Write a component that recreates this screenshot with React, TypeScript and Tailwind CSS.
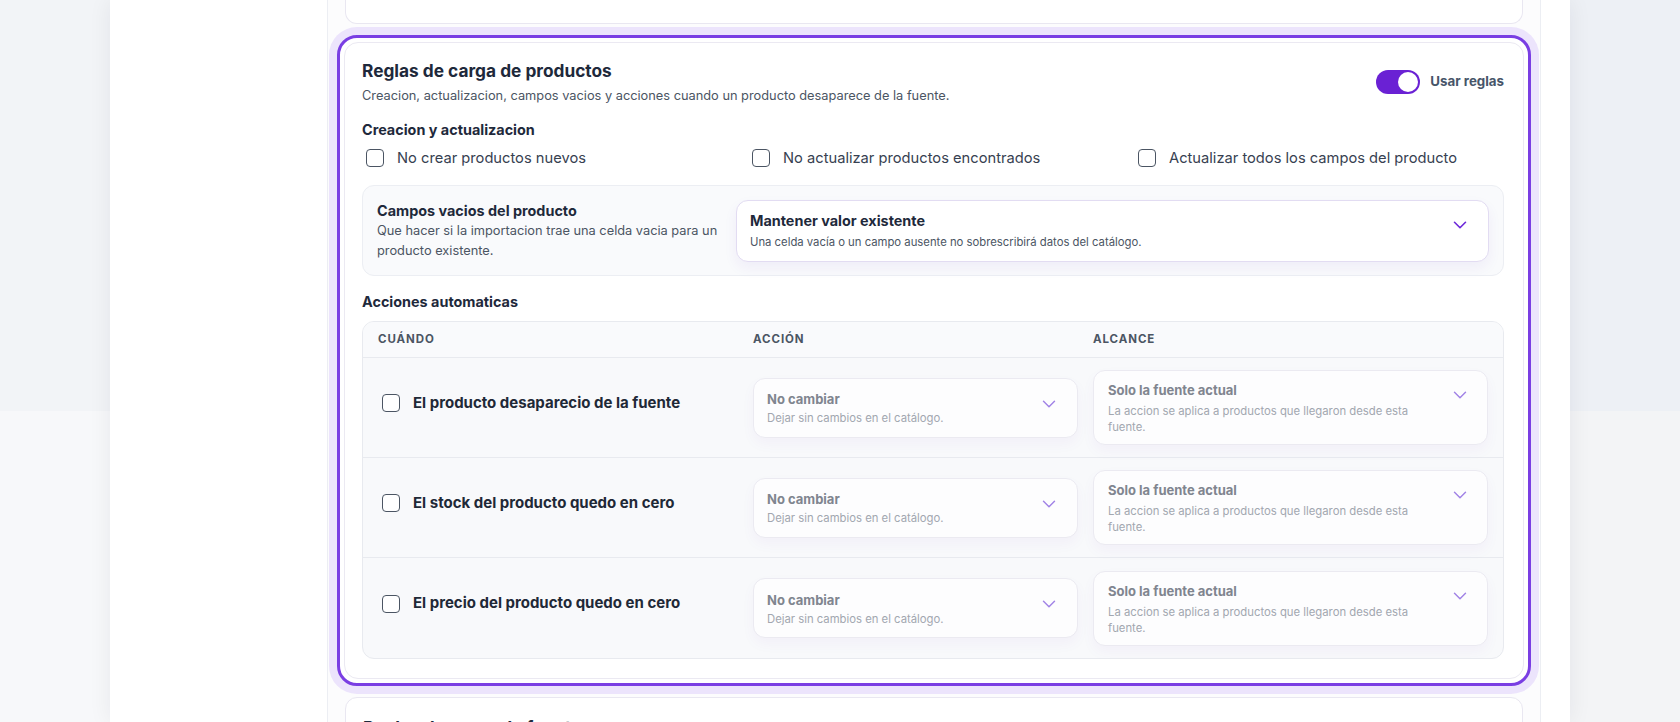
import React from 'react';
import { ChevronDown } from 'lucide-react';

const TRIGGERS = [
  'El producto desaparecio de la fuente',
  'El stock del producto quedo en cero',
  'El precio del producto quedo en cero',
];

function Checkbox() {
  return <span className="block w-[18px] h-[18px] shrink-0 rounded-[4px] border-[1.5px] border-[#4b5563] bg-white" />;
}

function Toggle() {
  return (
    <span className="flex items-center w-[44px] h-[24px] rounded-full bg-[#6a21d4] justify-end px-[2px]">
      <span className="block w-[20px] h-[20px] rounded-full bg-white" />
    </span>
  );
}

export default function App() {
  return (
    <div className="flex h-[722px] overflow-hidden bg-white" style={{ fontFamily: 'Inter, "Noto Sans", sans-serif' }}>
      {/* left gutter */}
      <div className="w-[110px] shrink-0 flex flex-col">
        <div className="h-[411px] bg-[#f2f4f7]" />
        <div className="flex-1 bg-[#f7f8fa]" />
      </div>

      {/* main panel */}
      <div className="flex-1 flex bg-white shadow-[0_0_22px_rgba(15,23,42,0.07)] relative">
        <div className="w-[217px] shrink-0" />

        <div className="w-[1214px] shrink-0 border-x border-[#eceef3] bg-[#fcfcfd] px-[17px] flex flex-col gap-[19px]">
          {/* previous card (scrolled) */}
          <div className="h-[24px] shrink-0 rounded-b-xl border border-t-0 border-[#e9e7f1] bg-white" />

          {/* selected card */}
          <div className="-mx-[8px] -my-[8px] shrink-0 rounded-[20px] border-[3px] border-[#7a3ee3] p-[4px] bg-white shadow-[0_0_0_8px_#ece4fc]">
            <div className="rounded-[14px] border border-[#ebe9f2] bg-white pl-[17px] pr-[19px] pt-[16px] pb-[19px]">
              <div className="flex items-center justify-between">
                <div>
                  <h2 className="text-[17.3px] leading-6 font-bold text-[#1e293b]">Reglas de carga de productos</h2>
                  <p className="mt-[4px] text-[12.8px] leading-[18px] text-[#4b5563]">
                    Creacion, actualizacion, campos vacios y acciones cuando un producto desaparece de la fuente.
                  </p>
                </div>
                <div className="flex items-center gap-[10px]">
                  <Toggle />
                  <span className="text-[13.3px] font-bold text-[#475569]">Usar reglas</span>
                </div>
              </div>

              <h3 className="mt-[15px] text-[14.4px] leading-5 font-bold text-[#1e293b]">Creacion y actualizacion</h3>
              <div className="mt-[7px] grid grid-cols-3 gap-[20px] pl-[4px]">
                {['No crear productos nuevos', 'No actualizar productos encontrados', 'Actualizar todos los campos del producto'].map((label) => (
                  <label key={label} className="flex items-center gap-[13px] h-[22px]">
                    <Checkbox />
                    <span className="text-[14.7px] text-[#374151]">{label}</span>
                  </label>
                ))}
              </div>

              {/* empty fields */}
              <div className="mt-4 h-[91px] rounded-xl border border-[#eceef3] bg-[#f9fafc] px-[14px] grid grid-cols-[344px_1fr] gap-[15px] items-center">
                <div>
                  <p className="text-[14.4px] leading-5 font-bold text-[#1e293b]">Campos vacios del producto</p>
                  <p className="w-[352px] text-[12.8px] leading-5 text-[#4b5563]">
                    Que hacer si la importacion trae una celda vacia para un producto existente.
                  </p>
                </div>
                <button className="h-[62px] rounded-xl border border-[#e2dcf2] bg-white pl-[13px] pr-[17px] flex items-center justify-between text-left shadow-[0_6px_14px_rgba(91,33,182,0.06)]">
                  <span>
                    <span className="block text-[14.4px] leading-5 font-bold text-[#1e293b]">Mantener valor existente</span>
                    <span className="block mt-[3px] text-[11.3px] leading-4 text-[#4b5563]">
                      Una celda vacía o un campo ausente no sobrescribirá datos del catálogo.
                    </span>
                  </span>
                  <ChevronDown size={22} strokeWidth={1.75} className="text-[#6d28d9] mb-[11px]" />
                </button>
              </div>

              <h3 className="mt-4 text-[14.4px] leading-5 font-bold text-[#1e293b]">Acciones automaticas</h3>

              {/* actions table */}
              <div className="mt-[9px] rounded-xl border border-[#e8eaef] bg-[#f8f9fb] overflow-hidden">
                <div className="h-[36px] grid grid-cols-[360px_325px_1fr] gap-[15px] px-[15px] items-center border-b border-[#e8eaef] bg-[#f9fafc] text-[11.5px] font-bold tracking-[0.08em] text-[#4b5563]">
                  <span>CUÁNDO</span>
                  <span>ACCIÓN</span>
                  <span>ALCANCE</span>
                </div>
                {TRIGGERS.map((trigger, i) => (
                  <div
                    key={trigger}
                    className={`h-[100px] grid grid-cols-[360px_325px_1fr] gap-[15px] px-[15px] items-center ${
                      i < TRIGGERS.length - 1 ? 'border-b border-[#e8eaef]' : ''
                    }`}
                  >
                    <label className="flex items-center gap-[13px] pl-[4px] mb-[9px]">
                      <Checkbox />
                      <span className="text-[15px] font-bold text-[#1f2937]">{trigger}</span>
                    </label>
                    <div className="h-[60px] rounded-xl border border-[#ebeaf1] bg-[#fdfdfe] pl-[13px] pr-[17px] flex items-center justify-between shadow-[0_6px_14px_rgba(91,33,182,0.04)]">
                      <span>
                        <span className="block text-[13px] leading-5 font-bold text-[#80858f]">No cambiar</span>
                        <span className="block mt-[1px] text-[11.3px] leading-4 text-[#a2a7b0]">Dejar sin cambios en el catálogo.</span>
                      </span>
                      <ChevronDown size={22} strokeWidth={1.6} className="text-[#a284e6] mb-[8px]" />
                    </div>
                    <div className="h-[75px] rounded-xl border border-[#ebeaf1] bg-[#fdfdfe] pl-[14px] pr-[16px] flex items-start justify-between pt-[9px] shadow-[0_6px_14px_rgba(91,33,182,0.04)]">
                      <span className="max-w-[310px]">
                        <span className="block text-[13px] leading-5 font-bold text-[#80858f]">Solo la fuente actual</span>
                        <span className="block mt-[3px] text-[11.3px] leading-4 text-[#a2a7b0]">
                          La accion se aplica a productos que llegaron desde esta fuente.
                        </span>
                      </span>
                      <ChevronDown size={22} strokeWidth={1.6} className="text-[#a284e6] mt-[4px]" />
                    </div>
                  </div>
                ))}
              </div>
            </div>
          </div>

          {/* next card */}
          <div className="shrink-0 h-[120px] rounded-t-xl border border-[#e9e7f1] bg-white pl-[17px] pt-[18px]">
            <h2 className="text-[17.3px] leading-6 font-bold text-[#1e293b]">Reglas de carga de fuente</h2>
          </div>
        </div>

        <div className="flex-1" />
      </div>

      {/* right gutter */}
      <div className="w-[110px] shrink-0 flex flex-col">
        <div className="h-[411px] bg-[#edf0f5]" />
        <div className="flex-1 bg-[#f3f4f6]" />
      </div>
    </div>
  );
}
